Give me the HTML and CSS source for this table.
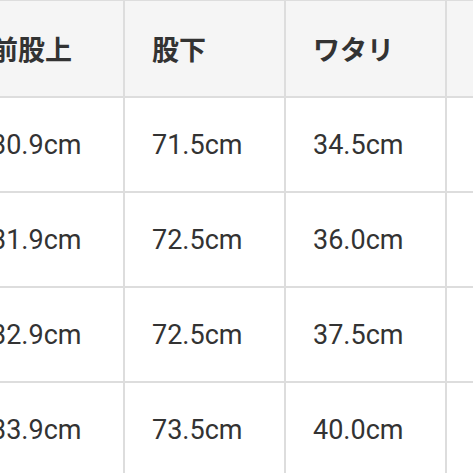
FILE: index.html
```html
<!DOCTYPE html>
<html lang="ja">
<head>
<meta charset="utf-8">
<link rel="stylesheet" href="styles.css">
</head>
<body>
<div class="wrap">
  <table class="size-table">
    <thead>
      <tr><th>前股上</th><th>股下</th><th>ワタリ</th><th>裾幅</th></tr>
    </thead>
    <tbody>
      <tr><td>30.9cm</td><td>71.5cm</td><td>34.5cm</td><td>19.5cm</td></tr>
      <tr><td>31.9cm</td><td>72.5cm</td><td>36.0cm</td><td>20.0cm</td></tr>
      <tr><td>32.9cm</td><td>72.5cm</td><td>37.5cm</td><td>20.5cm</td></tr>
      <tr><td>33.9cm</td><td>73.5cm</td><td>40.0cm</td><td>21.0cm</td></tr>
    </tbody>
  </table>
</div>
</body>
</html>
```
FILE: styles.css
```css
html, body {
  margin: 0;
  padding: 0;
  background: #ffffff;
  overflow: hidden;
  width: 473px;
  height: 473px;
}

.wrap {
  margin-left: -38px;
  margin-top: -1px;
}

.size-table {
  border-collapse: collapse;
  table-layout: fixed;
  width: 644px;
  font-family: Roboto, "Noto Sans CJK JP", sans-serif;
  color: #333333;
}

.size-table th,
.size-table td {
  width: 161px;
  border: 2px solid #dddddd;
  text-align: left;
  padding: 0 0 0 27px;
  box-sizing: border-box;
  white-space: nowrap;
}

.size-table th {
  height: 97px;
  background: #f5f5f5;
  font-family: "Noto Sans CJK JP", sans-serif;
  font-weight: 700;
  font-size: 27px;
  color: #333333;
}

.size-table td {
  height: 95px;
  font-size: 27px;
  font-weight: 400;
  color: #333333;
}
```
